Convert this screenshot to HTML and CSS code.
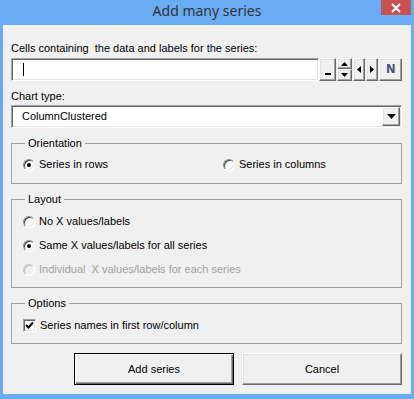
FILE: index.html
```html
<!DOCTYPE html>
<html lang="en">
<head>
    <meta charset="UTF-8">
    <meta name="viewport" content="width=device-width, initial-scale=1.0">
    <title>Add many series</title>
    <link rel="stylesheet" href="styles.css">
</head>
<body>
    <div class="window">
        <div class="titlebar">
            <div></div>
            <div class="title">Add many series</div>
            <div class="close-button">
                <svg width="10" height="10" viewBox="0 0 10 10">
                    <path d="M1 1 L9 9 M9 1 L1 9" stroke="#ffffff" stroke-width="2"/>
                </svg>
            </div>
        </div>

        <div class="client">
            <div class="field-label">Cells containing&nbsp; the data and labels for the series:</div>
            <div class="range-row">
                <div class="text-input sunken">
                    <span class="caret"></span>
                </div>
                <div class="btn min-button"><span class="min-bar"></span></div>
                <div class="spin">
                    <div class="btn spin-button">
                        <svg width="7" height="4" viewBox="0 0 7 4"><path d="M0 4 L3.5 0 L7 4 Z" fill="#000"/></svg>
                    </div>
                    <div class="btn spin-button">
                        <svg width="7" height="4" viewBox="0 0 7 4"><path d="M0 0 L3.5 4 L7 0 Z" fill="#000"/></svg>
                    </div>
                </div>
                <div class="btn arrow-button">
                    <svg width="4" height="7" viewBox="0 0 4 7"><path d="M4 0 L0 3.5 L4 7 Z" fill="#000"/></svg>
                </div>
                <div class="btn arrow-button">
                    <svg width="4" height="7" viewBox="0 0 4 7"><path d="M0 0 L4 3.5 L0 7 Z" fill="#000"/></svg>
                </div>
                <div class="btn n-button">N</div>
            </div>

            <div class="field-label chart-label">Chart type:</div>
            <div class="combo sunken">
                <span class="combo-text">ColumnClustered</span>
                <div class="btn combo-button">
                    <svg width="9" height="5" viewBox="0 0 9 5"><path d="M0 0 L4.5 5 L9 0 Z" fill="#000"/></svg>
                </div>
            </div>

            <div class="group orientation">
                <div class="legend">Orientation</div>
                <div class="orientation-options">
                    <div class="option"><span class="radio checked"></span>Series in rows</div>
                    <div class="option"><span class="radio"></span>Series in columns</div>
                </div>
            </div>

            <div class="group layout">
                <div class="legend">Layout</div>
                <div class="option"><span class="radio"></span>No X values/labels</div>
                <div class="option"><span class="radio checked"></span>Same X values/labels for all series</div>
                <div class="option disabled"><span class="radio"></span>Individual&nbsp; X values/labels for each series</div>
            </div>

            <div class="group options">
                <div class="legend">Options</div>
                <div class="option">
                    <span class="checkbox">
                        <svg width="9" height="9" viewBox="0 0 9 9"><path d="M1 4 L3.5 6.5 L8 1.5" stroke="#000" stroke-width="2" fill="none"/></svg>
                    </span>Series names in first row/column
                </div>
            </div>

            <div class="button-row">
                <div class="btn push-button default">Add series</div>
                <div class="btn push-button">Cancel</div>
            </div>
        </div>
    </div>
</body>
</html>
```

FILE: styles.css
```css
:root {
    --frame-color: #6aacf4;
    --face-color: #f0f0f0;
    --group-line: #a0a0a0;
}

* {
    box-sizing: border-box;
    margin: 0;
    padding: 0;
}

body {
    background: var(--frame-color);
    font-family: 'Liberation Sans', Arial, sans-serif;
    font-size: 11px;
    line-height: 13px;
    color: #000000;
}

.window {
    width: 414px;
    height: 399px;
    background: var(--frame-color);
}

.titlebar {
    height: 25px;
    display: grid;
    grid-template-columns: 33px 1fr 33px;
}

.title {
    text-align: center;
    font-family: 'Noto Sans', sans-serif;
    font-size: 14px;
    line-height: 22px;
    color: #333333;
}

.close-button {
    width: 30px;
    height: 15px;
    background: #c75050;
    display: flex;
    justify-content: center;
    align-items: center;
}

.client {
    margin: 0 3px;
    height: 369px;
    background: var(--face-color);
    padding: 17px 9px 0 8px;
}

/* 3D borders */
.sunken {
    border-style: solid;
    border-width: 1px;
    border-color: #a0a0a0 #ffffff #ffffff #a0a0a0;
    box-shadow: inset 1px 1px #696969, inset -1px -1px #e3e3e3;
    background: #ffffff;
}

.btn {
    background: var(--face-color);
    border-style: solid;
    border-width: 1px;
    border-color: #ffffff #696969 #696969 #ffffff;
    box-shadow: inset -1px -1px #a0a0a0, inset 1px 1px #e3e3e3;
    display: flex;
    justify-content: center;
    align-items: center;
}

.range-row {
    display: flex;
    gap: 1px;
    margin-top: 3px;
    height: 23px;
}

.text-input {
    width: 310px;
    display: flex;
    align-items: center;
    padding-left: 11px;
}

.caret {
    width: 1px;
    height: 13px;
    background: #000000;
}

.min-button {
    width: 17px;
    margin-left: -1px;
    align-items: flex-end;
    padding-bottom: 5px;
}

.min-bar {
    width: 6px;
    height: 2px;
    background: #000000;
}

.spin {
    width: 15px;
    display: flex;
    flex-direction: column;
}

.spin-button {
    height: 11px;
}

.spin-button + .spin-button {
    height: 12px;
}

.arrow-button {
    width: 12px;
}

.n-button {
    width: 23px;
    font-size: 12px;
    font-weight: bold;
    color: #2d4fb8;
    text-shadow: 1px 0 0 #e8b040;
}

.chart-label {
    margin-top: 9px;
}

.combo {
    margin-top: 2px;
    height: 23px;
    display: flex;
    align-items: center;
    justify-content: space-between;
    padding: 0 1px 0 10px;
}

.combo-button {
    width: 18px;
    height: 19px;
}

.group {
    border: 1px solid var(--group-line);
    padding: 0 0 11px 11px;
}

.legend {
    width: fit-content;
    margin: -7px 0 0 2px;
    padding: 0 3px;
    background: var(--face-color);
}

.orientation {
    margin-top: 15px;
    padding-bottom: 12px;
}

.orientation-options {
    display: grid;
    grid-template-columns: 200px 1fr;
    margin-top: 8px;
}

.layout,
.options {
    margin-top: 15px;
}

.option {
    display: flex;
    align-items: center;
    height: 13px;
}

.layout .option {
    margin-top: 11px;
}

.layout .legend + .option,
.options .option {
    margin-top: 9px;
}

.option.disabled {
    color: #a0a0a0;
}

.radio {
    width: 12px;
    height: 12px;
    border-radius: 50%;
    border: 1px solid;
    border-color: #8a8a8a #ffffff #ffffff #8a8a8a;
    box-shadow: inset 1px 1px #404040, inset -1px -1px #e3e3e3;
    background: #ffffff;
    margin-right: 4px;
    display: flex;
    justify-content: center;
    align-items: center;
}

.radio.checked::after {
    content: "";
    width: 4px;
    height: 4px;
    border-radius: 50%;
    background: #000000;
}

.disabled .radio {
    background: var(--face-color);
    box-shadow: inset 1px 1px #c0c0c0;
    border-color: #c8c8c8 #ffffff #ffffff #c8c8c8;
}

.checkbox {
    width: 13px;
    height: 13px;
    border-style: solid;
    border-width: 1px;
    border-color: #a0a0a0 #ffffff #ffffff #a0a0a0;
    box-shadow: inset 1px 1px #696969, inset -1px -1px #e3e3e3;
    background: #ffffff;
    margin-right: 4px;
    display: flex;
    justify-content: center;
    align-items: center;
}

.button-row {
    display: flex;
    justify-content: flex-end;
    gap: 8px;
    margin-top: 9px;
}

.push-button {
    width: 160px;
    height: 32px;
}

.push-button.default {
    border: 1px solid #000000;
    box-shadow: inset 1px 1px #ffffff, inset -1px -1px #696969, inset -2px -2px #a0a0a0;
}
```
